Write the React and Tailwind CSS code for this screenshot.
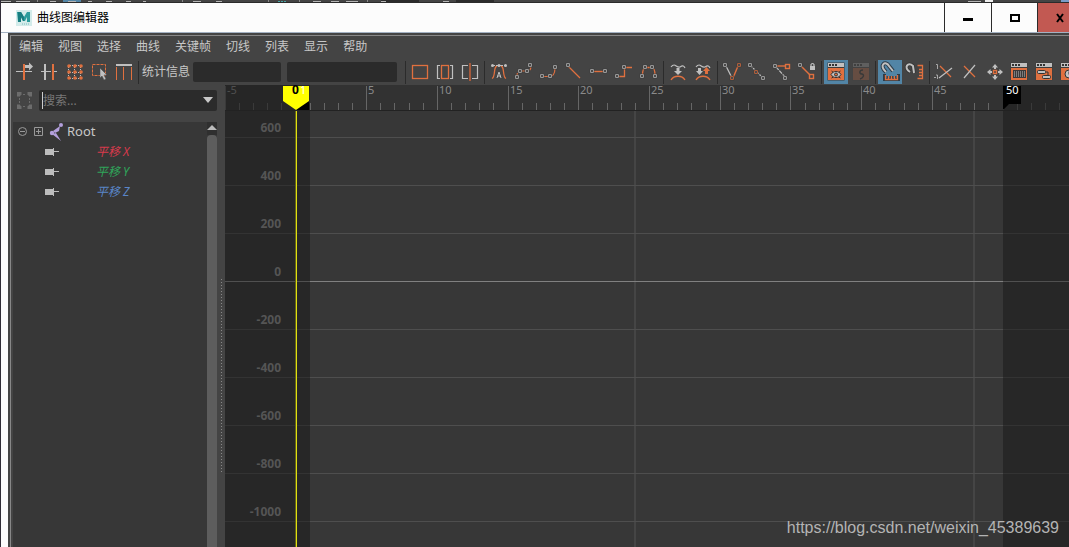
const G = '#c0c0c0'
const O = '#e0703f'

const MENUS = ['编辑', '视图', '选择', '曲线', '关键帧', '切线', '列表', '显示', '帮助']

const CHANNELS = [
  { name: '平移 X', className: 'text-[#d83a4c]' },
  { name: '平移 Y', className: 'text-[#2fa55a]' },
  { name: '平移 Z', className: 'text-[#5a86c8]' },
]

function Key({ x, y, color = G }) {
  return (
    <g>
      <rect x={x - 2} y={y - 2} width="4" height="4" fill={color} stroke="#383838" strokeWidth=".6" />
      <rect x={x - 1} y={y - 1} width="2" height="2" fill="#4a4a4a" />
    </g>
  )
}

function Panel({ children }) {
  return (
    <>
      <rect x="3.5" y="2.5" width="17" height="18" fill="#3c3c3c" />
      <rect x="4" y="3" width="16" height="4" fill={G} />
      <path d="M5 5h2M8 5h2M11 5h2" stroke="#333" strokeWidth="2" />
      <rect x="4" y="8" width="16" height="12" fill={O} />
      {children}
    </>
  )
}

const ICONS = {
  moveKey: (
    <>
      <path d="M4 11.5h16" stroke={G} />
      <rect x="11" y="4" width="2" height="16" fill={O} />
      <path d="M13 5h4V2.500l4 4-4 4V8h-4z" fill={G} />
    </>
  ),
  insertKey: (
    <>
      <path d="M4 11.5h4M9 11.5h5M17 11.5h3" stroke={G} />
      <rect x="7" y="4" width="2" height="16" fill={G} />
      <rect x="15" y="4" width="2" height="16" fill={O} />
    </>
  ),
  lattice: (
    <>
      <path d="M6.500 5v14M12.500 5v14M18.500 5v14M6 5.500h14M6 12.500h14M6 18.500h14" stroke={G} strokeDasharray="1 1" />
      {[6, 12, 18].map((y) => [7, 13, 19].map((x) => <circle key={x + '-' + y} cx={x} cy={y} r="1.8" fill={O} />))}
    </>
  ),
  region: (
    <>
      <rect x="5.5" y="4.5" width="13" height="11" fill="none" stroke={O} strokeDasharray="3 1" />
      <path d="M13 8v10l2-2 2 4 2-1-2-4h3z" fill={G} stroke="#444" strokeWidth=".5" />
    </>
  ),
  retime: (
    <>
      <path d="M4 5h16" stroke={G} strokeWidth="2" />
      <path d="M4.500 7v13M11.500 7v13M19.500 7v13" stroke={O} />
    </>
  ),
  frameAll: <rect x="4.5" y="5.5" width="15" height="13" fill="none" stroke={O} strokeWidth="1.3" />,
  framePlayback: (
    <>
      <path d="M7 5.500H4.500v13H7M17 5.500h2.500v13H17" fill="none" stroke={G} strokeWidth="1.2" />
      <rect x="8.500" y="5.500" width="7" height="13" fill="none" stroke={O} strokeWidth="1.3" />
    </>
  ),
  center: (
    <>
      <path d="M10 5.500H4.500v13H10M14 5.500h5.500v13H14" fill="none" stroke={G} strokeWidth="1.2" />
      <rect x="11" y="3" width="2" height="18" fill="#a55a3c" />
    </>
  ),
  autoTangent: (
    <>
      <path d="M5 18.500c4-2 1-12 5-12.500M19 18.500c-4-2-1-12-5-12.500" fill="none" stroke={O} strokeWidth="1.3" />
      <path d="M5 5.500h14" stroke={G} strokeDasharray="3 1" />
      <circle cx="5.500" cy="5.500" r="1.500" fill={G} />
      <circle cx="18.500" cy="5.500" r="1.500" fill={G} />
      <circle cx="12" cy="5.500" r="1.500" fill={G} />
      <path d="M10 18l2-6 2 6M10.500 16h3" fill="none" stroke={G} />
    </>
  ),
  spline: (
    <>
      <path d="M5 16c0-3 1-5 4-5h6c3 0 4-2 4-5" fill="none" stroke={O} strokeWidth="1.2" strokeDasharray="3 1" />
      <Key x={5} y={17} /><Key x={8} y={11} /><Key x={15} y={11} /><Key x={18} y={5} />
    </>
  ),
  clamped: (
    <>
      <path d="M6 16.500h6c4 0 6-2 6-9" fill="none" stroke={O} strokeWidth="1.200" />
      <Key x={5} y={16} /><Key x={13} y={16} /><Key x={18} y={7} />
    </>
  ),
  linear: (
    <>
      <path d="M6 6l12 12" stroke={O} strokeWidth="1.200" />
      <Key x={6} y={5} />
    </>
  ),
  flat: (
    <>
      <path d="M7 11.500h10" stroke={O} strokeWidth="1.400" />
      <Key x={5} y={11} /><Key x={18} y={11} />
    </>
  ),
  stepped: (
    <>
      <path d="M6 16.500h6.500v-9H20" fill="none" stroke={O} strokeWidth="1.300" />
      <Key x={5} y={16} /><Key x={12} y={7} />
    </>
  ),
  plateau: (
    <>
      <path d="M5.500 15c0-5 1-7 3-8M10 7.500h4M15 7c2 1 3 4 3 8" fill="none" stroke={O} strokeWidth="1.300" />
      <Key x={5} y={16} /><Key x={8} y={7} /><Key x={15} y={7} /><Key x={18} y={16} />
    </>
  ),
  bufferSnap: (
    <>
      <path d="M5 7c4-5 5 1 9 0 3-2 4-1 5 1" fill="none" stroke={G} strokeWidth="1.200" />
      <path d="M10.500 8h3v3H16l-4 4-4-4h2.500z" fill={G} />
      <path d="M5 20c3-5 11-5 14 0" fill="none" stroke={O} strokeWidth="1.300" />
    </>
  ),
  bufferSwap: (
    <>
      <path d="M5 7c4-5 5 1 9 0 3-2 4-1 5 1" fill="none" stroke={G} strokeWidth="1.200" />
      <path d="M7 8h3v3h2l-3.500 4L5 11h2z" fill={G} />
      <path d="M14 14v-3h-2l3.500-4 3.500 4h-2v3z" fill={O} />
      <path d="M5 20c3-5 11-5 14 0" fill="none" stroke={O} strokeWidth="1.300" />
    </>
  ),
  breakTangent: (
    <>
      <path d="M6 6l6 12" stroke={G} strokeWidth="1.200" />
      <path d="M13 18l5-12" stroke={O} strokeWidth="1.400" />
      <Key x={5} y={5} /><Key x={19} y={5} color={O} /><Key x={12} y={18} color={O} />
    </>
  ),
  unifyTangent: (
    <>
      <path d="M6 6l12 12" stroke={G} strokeWidth="1.200" strokeDasharray="2 1" />
      <Key x={5} y={5} /><Key x={11} y={12} color={O} /><Key x={18} y={18} />
    </>
  ),
  freeTangent: (
    <>
      <path d="M6 7l9 10" stroke={G} strokeWidth="1.200" strokeDasharray="4 1" />
      <path d="M7 6h8" stroke={O} strokeWidth="1.400" />
      <Key x={5} y={6} /><Key x={15} y={18} />
      <rect x="15.500" y="4.500" width="4" height="4" fill="#444" stroke={O} strokeWidth="1.400" />
    </>
  ),
  lockTangent: (
    <>
      <path d="M6 6l9 9" stroke={O} strokeWidth="1.400" />
      <Key x={5} y={5} />
      <rect x="14.500" y="14.500" width="4" height="4" fill="#444" stroke={O} strokeWidth="1.400" />
      <rect x="15" y="6" width="5" height="4" fill={G} />
      <path d="M16 6.500V4.500q1.500-2 3 0v2" fill="none" stroke={G} strokeWidth="1.200" />
    </>
  ),
  autoFrame: (
    <Panel>
      <path d="M7.500 11l2 1.500M16.500 11l-2 1.500M7.500 18l2-1M16.500 18l-2-1" stroke="#333" />
      <path d="M7 14.500c2-4 8-4 10 0-2 4-8 4-10 0z" fill={G} stroke="#333" />
      <circle cx="12" cy="14.500" r="1.500" fill={O} stroke="#333" />
    </Panel>
  ),
  autoLoad: (
    <g opacity=".22">
      <Panel>
        <path d="M14 10c-4 0-4 4-1 4 3 1 1 4-2 5" fill="none" stroke="#111" strokeWidth="1.500" />
      </Panel>
    </g>
  ),
  timeSnap: (
    <>
      <path d="M8 12C0 5 8 0 11 6l4 5" fill="none" stroke="#2d3c48" strokeWidth="4" />
      <path d="M8 12C0 5 8 0 11 6l4 5" fill="none" stroke={G} strokeWidth="2" />
      <path d="M6.500 14v5.500h14V14M10 16v3M13.500 16v3M17 16v3" fill="none" stroke="#2d3c48" strokeWidth="3" />
      <path d="M7.500 15v4.500h12V15M10.500 16v3M13.500 16v3M16.500 16v3" fill="none" stroke={O} strokeWidth="1.300" />
    </>
  ),
  valueSnap: (
    <>
      <path d="M7 12C0 8 5 1 10 6l1 7" fill="none" stroke="#333" strokeWidth="3.500" />
      <path d="M7 12C0 8 5 1 10 6l1 7" fill="none" stroke={G} strokeWidth="2" />
      <path d="M14.500 5.500h5v13h-5M16 9.500h3M16 12.500h3M16 15.500h3" fill="none" stroke={O} strokeWidth="1.300" />
    </>
  ),
  normalize: (
    <>
      <path d="M8 6l11 11" stroke={O} strokeWidth="1.300" />
      <path d="M7 18L20 8" stroke={G} strokeWidth="1.200" />
      <path d="M4 4.500h1.500V9M2 17.500h2M4 15h1.500v4" fill="none" stroke={G} strokeWidth=".8" />
    </>
  ),
  renormalize: (
    <>
      <path d="M7 6l11 11" stroke={O} strokeWidth="1.300" />
      <path d="M7 18L18 5" stroke={G} strokeWidth="1.200" />
    </>
  ),
  pan: (
    <>
      <path d="M13 4l3 3.500h-2V9h-2V7.500h-2zM13 20l3-3.500h-2V15h-2v1.500h-2zM5 12l3.500-3v2H10v2H8.500v2zM21 12l-3.500-3v2H16v2h1.500v2z" fill={G} />
      <rect x="11.500" y="10.500" width="3" height="3" fill="#444" stroke={O} strokeWidth="1.400" />
    </>
  ),
  dopeSheet: (
    <Panel>
      <rect x="6" y="10" width="13" height="8" fill="#3a3a3a" />
      <path d="M7 12h11M7 14h11M7 16h11" stroke={G} strokeDasharray="1 1" />
    </Panel>
  ),
  trax: (
    <Panel>
      <rect x="5.500" y="10.500" width="8" height="3" rx="1" fill={G} stroke="#333" />
      <rect x="10.500" y="15.500" width="8" height="3" rx="1" fill={G} stroke="#333" />
      <path d="M14 12h2v3" fill="none" stroke="#333" />
    </Panel>
  ),
  timeEditor: (
    <Panel>
      <circle cx="12" cy="14" r="4" fill={G} stroke="#333" />
      <path d="M12 11.500v3h2" fill="none" stroke="#333" />
    </Panel>
  ),
}

function Tool({ name, active }) {
  return (
    <button
      type="button"
      aria-label={name}
      aria-pressed={active}
      className={`size-6 shrink-0 ${active ? 'bg-[#5285a6]' : ''}`}
    >
      <svg viewBox="0 0 24 24" className="block size-6">
        {ICONS[name]}
      </svg>
    </button>
  )
}

function Separator() {
  return <div className="mx-px h-[23px] w-px shrink-0 bg-[#2b2b2b]" />
}

// bottom edge of the main window's toolbar, visible above this window
function ParentWindowEdge() {
  return (
    <svg className="block h-[3px] w-full shrink-0 bg-[#444]" shapeRendering="crispEdges">
      <path d="M62 0h18v2H62z" fill="#5285a6" />
      <path d="M380 0h38v2h-38zM455 0h38v2h-38z" fill="#2b2b2b" />
      <path d="M0 1h10M15 1h14M49 1h6M67 1h8M87 1h4M105 1h6M125 1h5M142 1h3M192 1h8M215 1h6M312 1h8M330 1h8M345 1h12M380 1h5M442 1h6M967 1h13" stroke="#b5b5b5" />
      <path d="M36 0v2M181 0v2M267 0v2M298 0v2M366 0v2" stroke="#888" />
      <path d="M277 1h8" stroke="#4aa5a5" strokeDasharray="2 1" />
      <path d="M984 0h8v2h-8z" fill="#eee" />
      <path d="M1060 0h9v2h-9z" fill="#7a9cc8" />
      <rect y="2" width="100%" height="1" fill="#2b2b2b" />
    </svg>
  )
}

function TitleBar() {
  return (
    <header className="flex h-[30px] shrink-0 border-b border-[#a3b1c2] bg-[#fcfcfc]">
      <div className="flex flex-1 items-center gap-[5px] pl-[15px] text-black">
        <svg viewBox="0 0 16 16" className="size-4">
          <rect width="16" height="16" fill="#d3ebea" />
          <path d="M1 2h4l3 5 3-5h3v10h-3V7l-2 4H7L5 7v5H2z" fill="#2b9c9c" />
          <path d="M2 2h3l3 5v4H7L5 7v5H2z" fill="#177d80" />
          <path d="M6 14h7" stroke="#7bbcbc" strokeDasharray="1 1" />
        </svg>
        <h1>曲线图编辑器</h1>
      </div>
      <button type="button" aria-label="最小化" className="flex w-[47px] items-center justify-center border-l border-[#2b2b2b]">
        <svg viewBox="0 0 10 10" className="size-2.5"><rect y="5" width="10" height="3" /></svg>
      </button>
      <button type="button" aria-label="最大化" className="flex w-[46px] items-center justify-center border-l border-[#2b2b2b]">
        <svg viewBox="0 0 10 10" className="size-2.5"><path d="M0 1h10v8H0zM2 3v4h6V3z" fillRule="evenodd" /></svg>
      </button>
      <button type="button" aria-label="关闭" className="flex w-8 items-center justify-end border-l border-[#2b2b2b] bg-[#c25952] pr-1">
        <svg viewBox="0 0 10 10" className="size-2.5"><path d="M2 1l6 8M8 1L2 9" stroke="#000" strokeWidth="2" /></svg>
      </button>
    </header>
  )
}

function ToolBar() {
  return (
    <div className="flex h-6 shrink-0 items-center gap-px overflow-hidden pl-px">
      <Tool name="moveKey" />
      <Tool name="insertKey" />
      <Tool name="lattice" />
      <Tool name="region" />
      <Tool name="retime" />
      <Separator />
      <label htmlFor="stat-frame" className="mr-0.5 shrink-0 pl-px">统计信息</label>
      <input id="stat-frame" className="h-5 w-[88px] shrink-0 rounded-xs bg-[#2b2b2b] px-1" />
      <input aria-label="值" className="mr-1.5 ml-[5px] h-5 w-[110px] shrink-0 rounded-xs bg-[#2b2b2b] px-1" />
      <Separator />
      <Tool name="frameAll" />
      <Tool name="framePlayback" />
      <Tool name="center" />
      <Separator />
      <Tool name="autoTangent" />
      <Tool name="spline" />
      <Tool name="clamped" />
      <Tool name="linear" />
      <Tool name="flat" />
      <Tool name="stepped" />
      <Tool name="plateau" />
      <Separator />
      <Tool name="bufferSnap" />
      <Tool name="bufferSwap" />
      <Separator />
      <Tool name="breakTangent" />
      <Tool name="unifyTangent" />
      <Tool name="freeTangent" />
      <Tool name="lockTangent" />
      <Separator />
      <Tool name="autoFrame" active />
      <Tool name="autoLoad" />
      <Separator />
      <Tool name="timeSnap" active />
      <Tool name="valueSnap" />
      <Separator />
      <Tool name="normalize" />
      <Tool name="renormalize" />
      <Tool name="pan" />
      <Tool name="dopeSheet" />
      <Tool name="trax" />
      <Tool name="timeEditor" />
    </div>
  )
}

function Outliner() {
  return (
    <aside className="flex w-[204px] shrink-0 flex-col">
      <div className="flex h-[37px] shrink-0 items-start gap-[7px] pt-[5px] pl-1">
        <svg viewBox="0 0 15 17" className="mt-0.5 h-[17px] w-[15px] shrink-0">
          <path d="M0 0h5l-1 1 1 1-3 3-1-1-1 1zM15 0h-5l1 1-1 1 3 3 1-1 1 1zM0 17h5l-1-1 1-1-3-3-1 1-1-1zM15 17h-5l1-1-1-1 3-3 1 1 1-1z" fill="#6c6c6c" />
          <path d="M2.500 6v5M12.500 6v5M6 2.500h3M6 14.500h3" stroke="#6c6c6c" strokeDasharray="2 1" />
        </svg>
        <div className="flex h-[21px] flex-1 items-center rounded-xs bg-[#2b2b2b] pr-1 pl-[3px]">
          <input
            type="text"
            aria-label="搜索"
            placeholder="搜索..."
            className="h-[17px] w-0 flex-1 border-l border-[#ccc] text-xs outline-none placeholder:text-[#777]"
          />
          <button type="button" aria-label="搜索选项" className="pb-0.5">
            <svg viewBox="0 0 10 6" className="block h-1.5 w-2.5"><path d="M0 0h10L5 6z" fill="#c8c8c8" /></svg>
          </button>
        </div>
      </div>
      <div className="flex min-h-0 flex-1 bg-[#373737]">
        <ul className="flex-1">
          <li className="flex h-5 items-center gap-1 pl-1 text-[13px] text-[#c8c8c8]">
            <svg viewBox="0 0 46 20" className="h-5 w-[46px]">
              <g fill="none" stroke="#999">
                <circle cx="5.500" cy="9.500" r="4" />
                <path d="M3 9.500h5M17.500 5.500h8v8h-8zM19 9.500h5M21.500 7v5" />
              </g>
              <g fill="#b39fdc">
                <circle cx="44" cy="3" r="2" />
                <circle cx="35" cy="11" r="2.200" />
                <path d="M43 4l-1 5-4 2-2-2zM35 12l4-1 5 8z" />
              </g>
            </svg>
            Root
          </li>
          {CHANNELS.map((c) => (
            <li key={c.name} className={`flex h-5 items-center gap-[37px] pl-8 text-xs italic ${c.className}`}>
              <svg viewBox="0 0 14 9" className="h-[9px] w-3.5">
                <path d="M0 1h8V0h1v3h5v1H9v4H8V7H0z" fill="#bdbdbd" />
              </svg>
              {c.name}
            </li>
          ))}
        </ul>
        <div className="flex w-2.5 flex-col">
          <svg viewBox="0 0 10 13" className="h-[13px] w-2.5 shrink-0 bg-[#2f2f2f]">
            <path d="M0 8l5-5 5 5z" fill="#bbb" />
          </svg>
          <div className="flex-1 rounded-t-sm bg-[#5d5d5d]" />
        </div>
      </div>
    </aside>
  )
}

// origin of the graph view is frame -5; frame 0 sits at x=71
const FRAME = 14.14
const frameX = (f) => Math.floor(71 + f * FRAME)

function Ruler() {
  const frames = Array.from({ length: 61 }, (_, i) => i - 5)
  return (
    <svg className="block h-[26px] w-full shrink-0 overflow-visible bg-[#262626]">
      <rect x="85" width="693" height="26" fill="#323232" />
      {frames.map((f) => {
        const major = f % 5 === 0
        const inside = f > 0 && f <= 50
        return (
          <g key={f}>
            <rect
              x={frameX(f)}
              y={major ? 1 : 18}
              width="1"
              height={major ? 24 : 7}
              fill={inside ? '#666' : '#3a3a3a'}
            />
            {major && f !== 0 && f < 50 && (
              <text x={frameX(f) + 2} y="9" fontSize="11" fill={inside ? '#8a8a8a' : '#505050'}>{f}</text>
            )}
          </g>
        )
      })}
      <rect y="25" width="100%" height="1" fill="#222" />
      <path d="M778 1h18v18h-12l-6 6zM70 25h14v-9z" fill="#000" />
      <text x="781" y="9" fontSize="11" fill="#fff">50</text>
      <path d="M58 1h26v15L71 25 58 16z" fill="#ff0" />
      <text x="67" y="9" fontSize="12" fontWeight="700" fill="#000">0</text>
      <text x="75" y="9" fontSize="11" fill="#fff">1</text>
    </svg>
  )
}

function Graph() {
  const values = [600, 400, 200, 0, -200, -400, -600, -800, -1000]
  return (
    <svg className="block min-h-0 w-full flex-1 bg-[#272727]">
      <rect x="85" width="693" height="100%" fill="#373737" />
      <path d="M410 0v2000M749 0v2000" stroke="#454545" strokeWidth="2" />
      {values.map((v, i) => {
        const y = 26 + i * 48
        return (
          <g key={v}>
            <rect y={y} width="100%" height="1" fill={v === 0 ? '#505050' : '#333'} />
            <rect x="85" y={y} width="693" height="1" fill={v === 0 ? '#808080' : '#4e4e4e'} />
            <text x="56" y={y - 5} fontSize="12" fontWeight="700" textAnchor="end" fill="#555">{v}</text>
          </g>
        )
      })}
      <rect x="70" width="1" height="100%" fill="#66661a" />
      <rect x="71" width="1" height="100%" fill="#e0e010" />
    </svg>
  )
}

export default function App() {
  return (
    <div className="relative flex h-screen flex-col overflow-hidden border-l border-[#302c36] bg-[#fcfcfc] font-['Noto_Sans','Noto_Sans_CJK_SC',sans-serif] text-xs text-[#c8c8c8]">
      <ParentWindowEdge />
      <TitleBar />
      <main className="ml-[7px] flex min-h-0 flex-1 flex-col bg-[#444] pt-0.5 pl-0.5">
        <div className="flex min-h-0 flex-1 flex-col border-t border-l border-[#888]">
          <nav className="flex h-6 shrink-0 items-center gap-[15px] pb-0.5 pl-2">
            {MENUS.map((m) => (
              <button key={m} type="button">{m}</button>
            ))}
          </nav>
          <ToolBar />
          <div className="flex min-h-0 flex-1 pt-px pl-0.5">
            <Outliner />
            <div className="flex w-2 shrink-0 items-start justify-center pt-[194px]">
              <div className="h-[194px] w-px bg-[repeating-linear-gradient(#888_0_1px,transparent_1px_3px)]" />
            </div>
            <section aria-label="曲线图" className="flex min-w-0 flex-1 flex-col">
              <Ruler />
              <Graph />
            </section>
          </div>
        </div>
      </main>
      <p className="absolute right-2.5 bottom-[7px] font-['Liberation_Sans',sans-serif] text-base text-[#b4b4b4]">
        https://blog.csdn.net/weixin_45389639
      </p>
    </div>
  )
}
